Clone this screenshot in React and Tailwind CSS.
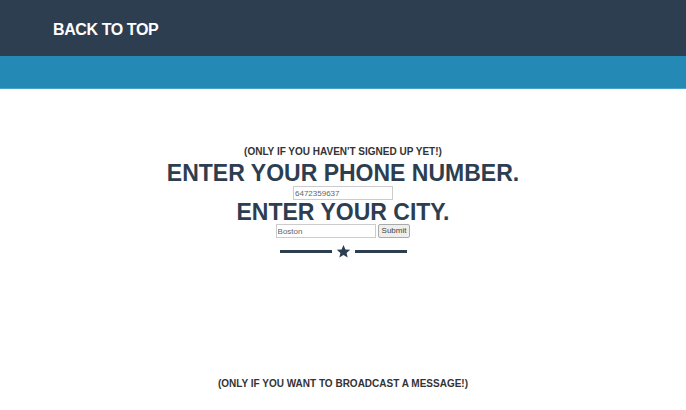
import React from "react";

const App = () => {
    return (
        <div className="min-h-[410px] bg-white font-['Liberation_Sans',Arial,sans-serif]">
            <header className="h-[56px] bg-[#2c3e50] flex items-center px-[53px] pt-[4px]">
                <a href="#top" className="text-white font-bold text-[16px] tracking-tight">BACK TO TOP</a>
            </header>
            <div className="h-[33px] bg-[#2489b4] border-b border-[#4aa3c8]"></div>

            <section className="flex flex-col items-center pt-[56px] text-[#2c3e50]">
                <p className="font-bold text-[10px] leading-[13px] text-[#333]">(ONLY IF YOU HAVEN'T SIGNED UP YET!)</p>
                <h2 className="font-bold text-[23px] leading-[26px] mt-[2px]">ENTER YOUR PHONE NUMBER.</h2>
                <input
                    type="text"
                    defaultValue="6472359637"
                    className="w-[100px] h-[14px] border border-[#ccc] text-[8px] px-[1px] text-[#666] outline-none"
                />
                <h2 className="font-bold text-[23px] leading-[24px]">ENTER YOUR CITY.</h2>
                <div className="flex items-center gap-[2px]">
                    <input
                        type="text"
                        defaultValue="Boston"
                        className="w-[100px] h-[14px] border border-[#ccc] text-[8px] px-[1px] text-[#666] outline-none"
                    />
                    <button className="h-[14px] px-[3px] text-[8px] font-normal text-[#444] bg-[#eee] border border-[#aaa] rounded-[2px]">Submit</button>
                </div>
                <div className="flex items-center gap-[4px] mt-[6px]">
                    <div className="w-[52px] h-[3px] bg-[#2c3e50]"></div>
                    <svg width="15" height="15" viewBox="0 0 24 24" fill="#2c3e50">
                        <path d="M12 1.5l3.1 7.1 7.6.6-5.8 5 1.8 7.5L12 17.7l-6.7 4 1.8-7.5-5.8-5 7.6-.6z" />
                    </svg>
                    <div className="w-[52px] h-[3px] bg-[#2c3e50]"></div>
                </div>
                <p className="font-bold text-[10px] leading-[13px] text-[#333] mt-[118px]">(ONLY IF YOU WANT TO BROADCAST A MESSAGE!)</p>
            </section>
        </div>
    );
};

export default App;
